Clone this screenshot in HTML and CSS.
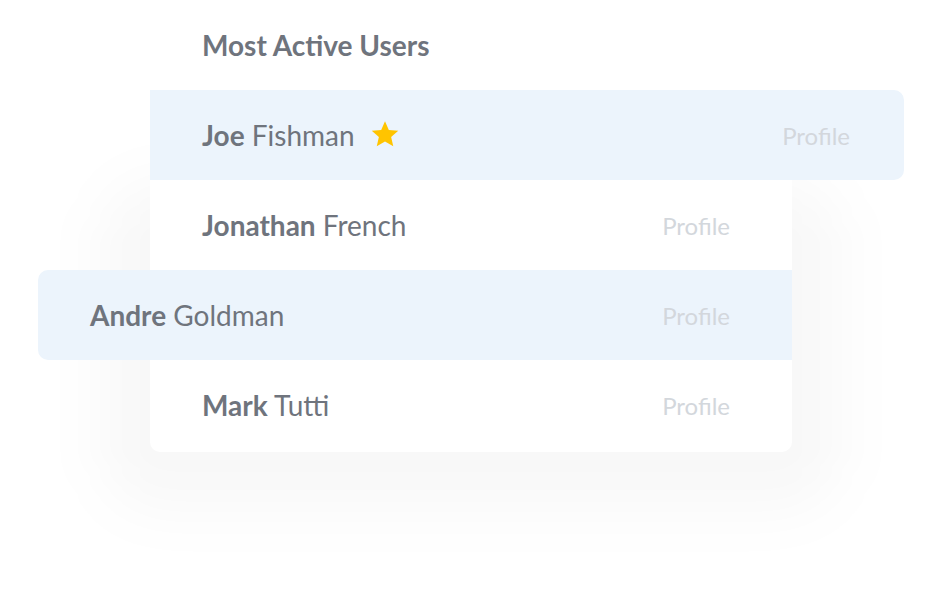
FILE: index.html
```html
<!DOCTYPE html>
<html>
<head>
<meta charset="utf-8">
<link rel="stylesheet" href="styles.css">
</head>
<body>
<div class="stage">
  <div class="card">
    <div class="heading">Most Active Users</div>
    <div class="row row--hl row--out-right">
      <span class="name"><b>Joe</b> Fishman</span>
      <svg class="star" viewBox="0 0 24 24" width="30" height="30"><path d="M12 1.8l3.05 6.95 7.55.7-5.7 5 1.7 7.4L12 17.95 5.4 21.85l1.7-7.4-5.7-5 7.55-.7z" fill="#FFC400"/></svg>
      <span class="profile">Profile</span>
    </div>
    <div class="row">
      <span class="name"><b>Jonathan</b> French</span>
      <span class="profile">Profile</span>
    </div>
    <div class="row row--hl row--out-left">
      <span class="name"><b>Andre</b> Goldman</span>
      <span class="profile">Profile</span>
    </div>
    <div class="row">
      <span class="name"><b>Mark</b> Tutti</span>
      <span class="profile">Profile</span>
    </div>
  </div>
</div>
</body>
</html>
```

FILE: styles.css
```css
html {
  margin: 0;
  padding: 0;
  background: #ffffff;
}
body {
  margin: 0;
  padding: 0;
  font-family: Lato, "Open Sans", sans-serif;
  width: 942px;
  height: 602px;
  overflow: hidden;
}
.stage {
  padding-left: 150px;
}
.card {
  position: relative;
  width: 642px;
  background: #ffffff;
  border-radius: 0 0 10px 10px;
  padding-bottom: 2px;
}
.card::before {
  content: "";
  position: absolute;
  left: -50px;
  right: -50px;
  top: 180px;
  bottom: -60px;
  background: rgba(0, 0, 0, 0.028);
  border-radius: 60px;
  filter: blur(28px);
  z-index: -1;
}
.heading {
  height: 90px;
  display: flex;
  align-items: center;
  padding-left: 52px;
  font-size: 28px;
  font-weight: 700;
  color: #6f747d;
}
.row {
  height: 90px;
  display: flex;
  align-items: center;
  padding-left: 52px;
  padding-right: 62px;
  font-size: 28px;
  color: #6f747d;
}
.row b {
  font-weight: 700;
}
.row--hl {
  background: #ecf4fc;
}
.row--out-right {
  margin-right: -112px;
  border-radius: 0 10px 10px 0;
  padding-right: 54px;
}
.row--out-left {
  margin-left: -112px;
  border-radius: 10px 0 0 10px;
}
.star {
  margin-left: 15px;
  margin-top: -2px;
}
.profile {
  margin-left: auto;
  font-size: 24px;
  color: #d3d7dc;
}
```
